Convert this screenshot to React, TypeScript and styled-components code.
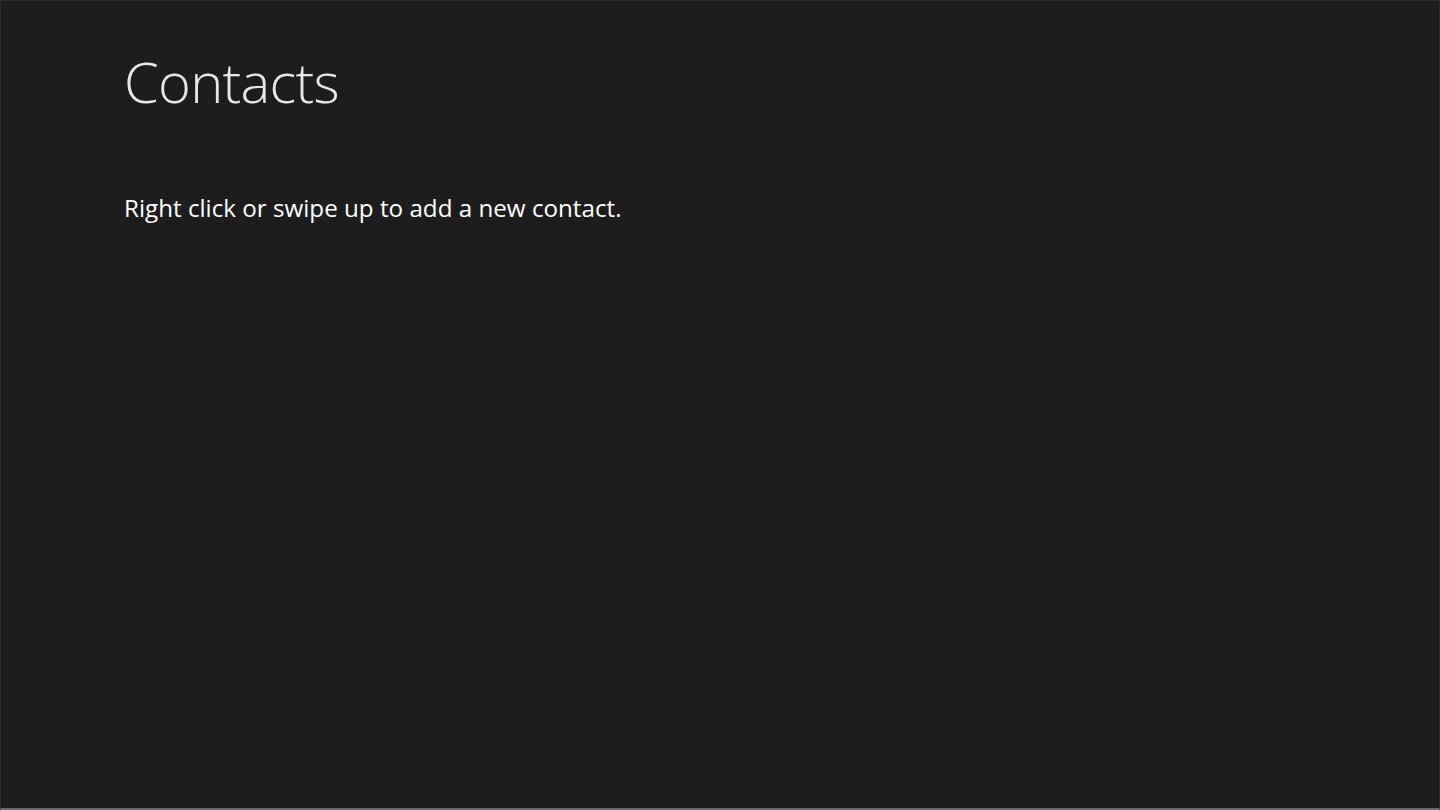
import React from 'react';
import styled, { createGlobalStyle } from 'styled-components';

const GlobalStyle = createGlobalStyle`
  html, body {
    margin: 0;
    padding: 0;
    background: #1d1d1d;
  }
`;

function App() {
  return (
    <>
      <GlobalStyle />
      <Page>
        <Header>
          <PageTitle>Contacts</PageTitle>
        </Header>
        <Content>
          <EmptyMessage>Right click or swipe up to add a new contact.</EmptyMessage>
        </Content>
      </Page>
    </>
  );
}

const Page = styled.div`
  box-sizing: border-box;
  width: 1440px;
  height: 810px;
  background: #1d1d1d;
  border: 1px solid #2c2c2c;
  border-bottom: 2px solid #6a6a6a;
  display: flex;
  flex-direction: column;
  padding: 0 0 0 123px;
  font-family: 'Open Sans', 'Liberation Sans', sans-serif;
  color: #ffffff;
`;

const Header = styled.header`
  display: flex;
  align-items: flex-end;
  height: 108px;
`;

const PageTitle = styled.h1`
  margin: 0;
  font-size: 56px;
  font-weight: 300;
  line-height: 1;
  letter-spacing: -0.7px;
  color: #e8e8e8;
`;

const Content = styled.main`
  padding-top: 83px;
`;

const EmptyMessage = styled.p`
  margin: 0;
  font-size: 24.2px;
  font-weight: 400;
  line-height: 1.3;
  color: #ffffff;
`;

export default App;
